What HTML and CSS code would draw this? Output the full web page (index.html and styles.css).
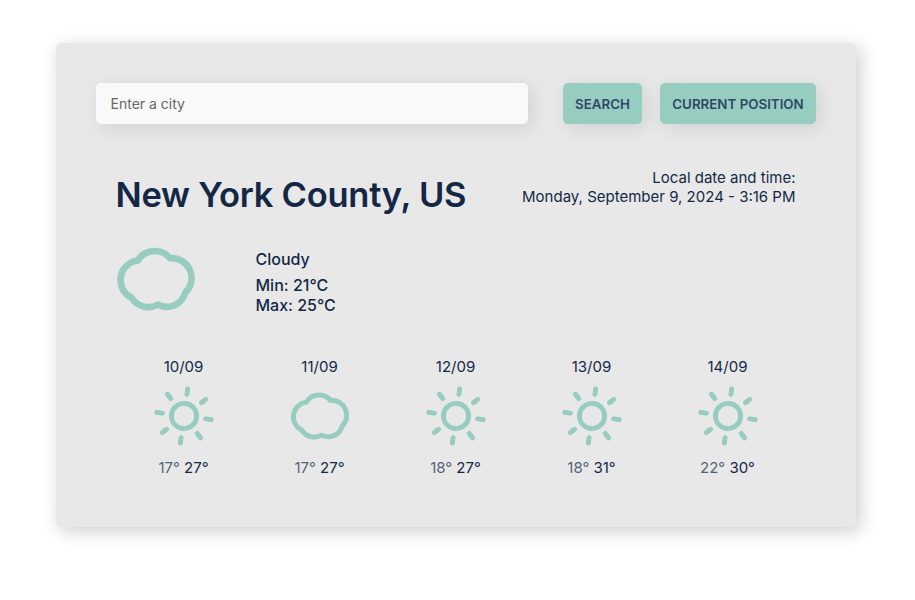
FILE: index.html
```html
<!DOCTYPE html>
<html lang="en">
<head>
<meta charset="utf-8">
<title>Weather</title>
<link rel="stylesheet" href="styles.css">
</head>
<body>
<svg class="defs" aria-hidden="true">
  <symbol id="cloud" viewBox="0 0 80 80">
    <path d="M21.7 21.5A20 20 0 0 1 54 19.2A20 20 0 0 1 69.3 53.7A19 19 0 0 1 42 65.5A19.5 19.5 0 0 1 15.7 58.8A19.7 19.7 0 0 1 21.7 21.5Z" fill="none" stroke="currentColor" stroke-width="6.6" stroke-linejoin="round"/>
  </symbol>
  <symbol id="sun" viewBox="-30 -30 60 60">
    <g fill="none" stroke="currentColor" stroke-width="4.9" stroke-linecap="round" transform="rotate(7.7)">
      <circle r="12.6"/>
      <path d="M0-21.9V-27.4M0 21.9V27.4M-21.9 0H-27.4M21.9 0H27.4"/>
      <path transform="rotate(45)" d="M0-21.9V-27.4M0 21.9V27.4M-21.9 0H-27.4M21.9 0H27.4"/>
    </g>
  </symbol>
</svg>
<main class="card">
  <form class="search">
    <input class="city" type="text" placeholder="Enter a city">
    <button class="btn" type="button">SEARCH</button>
    <button class="btn" type="button">CURRENT POSITION</button>
  </form>
  <header class="heading">
    <h1 class="title">New York County, US</h1>
    <p class="date">Local date and time:<br>Monday, September 9, 2024 - 3:16 PM</p>
  </header>
  <section class="current">
    <svg class="icon-large"><use href="#cloud"/></svg>
    <div class="details">
      <p class="condition">Cloudy</p>
      <p>Min: 21°C</p>
      <p>Max: 25°C</p>
    </div>
  </section>
  <section class="forecast">
    <div class="day"><span>10/09</span><svg class="icon"><use href="#sun"/></svg><span><span class="low">17°</span> 27°</span></div>
    <div class="day"><span>11/09</span><svg class="icon"><use href="#cloud"/></svg><span><span class="low">17°</span> 27°</span></div>
    <div class="day"><span>12/09</span><svg class="icon"><use href="#sun"/></svg><span><span class="low">18°</span> 27°</span></div>
    <div class="day"><span>13/09</span><svg class="icon"><use href="#sun"/></svg><span><span class="low">18°</span> 31°</span></div>
    <div class="day"><span>14/09</span><svg class="icon"><use href="#sun"/></svg><span><span class="low">22°</span> 30°</span></div>
  </section>
</main>
</body>
</html>
```
FILE: styles.css
```css
* { box-sizing: border-box; }
body {
  min-height: 600px;
  margin: 0;
  padding: 43px 59px 0 56px;
  background: #fff;
  color: #142846;
  font-family: Inter, sans-serif;
  font-size: 16px;
}
h1, p { margin: 0; }
.defs { display: none; }
.card {
  width: 800px;
  height: 484px;
  padding: 40px;
  border-radius: 5px;
  background: #e8e8e8;
  box-shadow: 4px 4px 18px rgba(0, 0, 0, 0.2);
}
.search { display: flex; height: 41px; }
.city, .btn {
  border: 0;
  border-radius: 5px;
  box-shadow: 4px 4px 18px rgba(0, 0, 0, 0.1);
  font-family: inherit;
}
.city {
  width: 432px;
  margin-right: 35px;
  padding: 0 14.5px;
  background: #f9f9f9;
  font-size: 14px;
}
.city::placeholder { color: #666; }
.btn {
  width: 79px;
  padding: 0;
  background: #96cdc0;
  color: #304766;
  font-size: 13.33px;
  font-weight: 600;
  white-space: nowrap;
}
.btn + .btn { width: 156px; margin-left: 18px; }
.heading {
  display: flex;
  justify-content: space-between;
  padding: 44px 20.5px 0 19.5px;
}
.title {
  padding-top: 4px;
  font-size: 34.5px;
  line-height: 45px;
  font-weight: 600;
  letter-spacing: -0.27px;
  white-space: nowrap;
}
.date {
  font-size: 15px;
  line-height: 19px;
  text-align: right;
  white-space: nowrap;
}
.current { display: flex; padding: 22px 20px 0; height: 140px; }
.icon-large { width: 80px; height: 80px; color: #96cdc0; }
.details {
  padding: 10px 0 0 59.5px;
  font-weight: 500;
  line-height: 20px;
}
.condition { margin-bottom: 6px; }
.forecast { display: flex; padding: 0 20px; }
.day {
  display: flex;
  flex: 1;
  flex-direction: column;
  align-items: center;
  font-size: 15px;
  line-height: 20px;
}
.day > span { padding-right: 1px; }
.icon { width: 60px; height: 60px; margin: 9px 0 12px; color: #96cdc0; }
.low { opacity: 0.7; }
```
